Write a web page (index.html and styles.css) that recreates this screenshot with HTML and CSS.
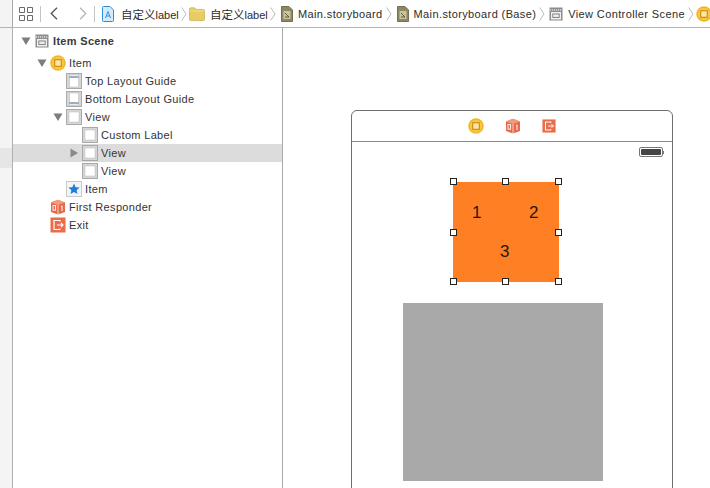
FILE: index.html
```html
<!DOCTYPE html>
<html lang="zh">
<head>
<meta charset="utf-8">
<title>Storyboard</title>
<link rel="stylesheet" href="styles.css">
</head>
<body>
<svg class="defs" width="0" height="0" aria-hidden="true">
  <defs>
    <symbol id="vc" viewBox="0 0 16 16"><circle cx="8" cy="8" r="7.8" fill="#f5bd2f"/><circle cx="8" cy="8" r="6.6" fill="#f8c83f" stroke="#eaa91f" stroke-width=".5"/><rect x="4.7" y="4.7" width="6.6" height="6.6" fill="#fbe6a6" stroke="#c98a12" stroke-width="1.1"/></symbol>
    <symbol id="cube" viewBox="0 0 16 16"><path d="M8 .8 15 3.4V13L8 15.6 1 13V3.4Z" fill="#e8694a"/><path d="M8 .8 15 3.4 8 6 1 3.4Z" fill="#f49a7c"/><path d="M8 6V15.6" stroke="#fff" stroke-width=".7"/><rect x="3" y="6.6" width="2.6" height="4.6" fill="none" stroke="#fff" stroke-width=".9"/><path d="M11 7.5 12 7V12" fill="none" stroke="#fff" stroke-width="1"/></symbol>
    <symbol id="exit" viewBox="0 0 16 16"><rect x=".5" y=".5" width="15" height="15" fill="#ea6c48"/><path d="M10 4.5V3.5H4V12.5H10V11.5" fill="none" stroke="#fff" stroke-width="1.2"/><path d="M7 8H13M11 6 13 8 11 10" fill="none" stroke="#fff" stroke-width="1.1"/></symbol>
    <symbol id="scene" viewBox="0 0 14 14"><rect x=".5" y=".5" width="13" height="13" fill="#8c8c8c"/><path d="M1 3H13" stroke="#ddd" stroke-width="1.4" stroke-dasharray="1.2 .8"/><rect x="2" y="5" width="10" height="7.5" fill="#efefef"/><rect x="3.8" y="7" width="6.4" height="3.4" fill="none" stroke="#777" stroke-width=".9"/></symbol>
    <symbol id="view" viewBox="0 0 16 16"><rect width="16" height="16" fill="#d6d6d6"/><rect x=".5" y=".5" width="15" height="15" fill="none" stroke="#a8a8a8"/><rect x="3" y="3" width="10" height="10" fill="#fff" stroke="#bdbdbd" stroke-width=".5"/></symbol>
    <symbol id="top" viewBox="0 0 16 16"><rect width="16" height="16" fill="#d6d6d6"/><rect x=".5" y=".5" width="15" height="15" fill="none" stroke="#ababab"/><rect x="3.5" y="2" width="9" height="12" fill="#fff" stroke="#b5b5b5" stroke-width=".5"/><path d="M3.5 4H12.5" stroke="#3c5f86" stroke-width="1"/></symbol>
    <symbol id="bottom" viewBox="0 0 16 16"><rect width="16" height="16" fill="#d6d6d6"/><rect x=".5" y=".5" width="15" height="15" fill="none" stroke="#ababab"/><rect x="3.5" y="2" width="9" height="12" fill="#fff" stroke="#b5b5b5" stroke-width=".5"/><path d="M3.5 12H12.5" stroke="#3c5f86" stroke-width="1"/></symbol>
    <symbol id="star" viewBox="0 0 16 16"><rect x=".5" y=".5" width="15" height="15" fill="#f4f4f4" stroke="#c9c9c9"/><path d="M8 2.6 9.6 6.3 13.6 6.6 10.6 9.2 11.5 13.1 8 11 4.5 13.1 5.4 9.2 2.4 6.6 6.4 6.3Z" fill="#1f7be0"/></symbol>
    <symbol id="swift" viewBox="0 0 12 16"><path d="M.5 1.5C.5.9.9.5 1.5.5H8L11.5 4V14.5C11.5 15.1 11.1 15.5 10.5 15.5H1.5C.9 15.5.5 15.1.5 14.5Z" fill="#d6eafb" stroke="#2d8fe3"/><path d="M3.5 12 6 5.5 8.5 12M4.5 10H7.5" fill="none" stroke="#2d8fe3"/></symbol>
    <symbol id="folder" viewBox="0 0 16 14"><path d="M.5 2C.5 1.2 1 .8 1.6.8H5.6L7 2.4H14.6C15.2 2.4 15.5 2.8 15.5 3.4V12.6C15.5 13.2 15.2 13.5 14.6 13.5H1.4C.8 13.5.5 13.2.5 12.6Z" fill="#e8cb64" stroke="#c7a23a" stroke-width=".6"/><path d="M.8 4H15.2" stroke="#f3df92"/></symbol>
    <symbol id="board" viewBox="0 0 12 16"><path d="M.5.5H8L11.5 4V15.5H.5Z" fill="#8f8762" stroke="#77704f"/><rect x="2.5" y="5" width="7" height="8" fill="#c9c3a0"/><path d="M4 7 8 11M4 11H8" stroke="#55503a" stroke-width=".9"/></symbol>
    <symbol id="tri" viewBox="0 0 10 10"><path d="M.5 1.5H9.5L5 9Z" fill="#7d7d7d"/></symbol>
    <symbol id="tri-r" viewBox="0 0 10 10"><path d="M1.5.5V9.5L9 5Z" fill="#8a8a8a"/></symbol>
    <symbol id="sep" viewBox="0 0 6 14"><path d="M.7.5 5 7 .7 13.5" fill="none" stroke="#a8a8a8" stroke-width=".8"/></symbol>
  </defs>
</svg>

<div class="app">
  <header class="toolbar">
    <div class="tb-left"><span class="tb-stub"></span></div>
    <div class="tb-grid">
      <svg width="14" height="14" viewBox="0 0 14 14"><path d="M.5.5H5.5V5.5H.5ZM8.5.5H13.5V5.5H8.5ZM.5 8.5H5.5V13.5H.5ZM8.5 8.5H13.5V13.5H8.5Z" fill="none" stroke="#6b6b6b"/></svg>
    </div>
    <span class="tb-div"></span>
    <div class="tb-nav">
      <svg width="8" height="13" viewBox="0 0 8 13"><path d="M7 .7 1.2 6.5 7 12.3" fill="none" stroke="#555" stroke-width="1.3"/></svg>
      <svg width="8" height="13" viewBox="0 0 8 13"><path d="M1 .7 6.8 6.5 1 12.3" fill="none" stroke="#b5b5b5" stroke-width="1.3"/></svg>
    </div>
    <span class="tb-div"></span>
    <nav class="crumbs">
      <svg class="c-file" width="12" height="16"><use href="#swift"/></svg>
      <span class="c-text c-a"><span class="cjk">自定义</span>label</span>
      <svg class="c-sep" width="6" height="14"><use href="#sep"/></svg>
      <svg class="c-folder" width="16" height="14"><use href="#folder"/></svg>
      <span class="c-text c-b"><span class="cjk">自定义</span>label</span>
      <svg class="c-sep" width="6" height="14"><use href="#sep"/></svg>
      <svg class="c-file2" width="12" height="16"><use href="#board"/></svg>
      <span class="c-text c-c">Main.storyboard</span>
      <svg class="c-sep" width="6" height="14"><use href="#sep"/></svg>
      <svg class="c-file2" width="12" height="16"><use href="#board"/></svg>
      <span class="c-text c-c">Main.storyboard (Base)</span>
      <svg class="c-sep" width="6" height="14"><use href="#sep"/></svg>
      <svg class="c-scene" width="14" height="14"><use href="#scene"/></svg>
      <span class="c-text c-c">View Controller Scene</span>
      <svg class="c-sep" width="6" height="14"><use href="#sep"/></svg>
      <svg class="c-vc" width="16" height="16"><use href="#vc"/></svg>
    </nav>
  </header>

  <div class="main">
    <aside class="gutter"><div class="gutter-sel"></div></aside>

    <section class="outline">
      <div class="row row-scene lvl0">
        <svg class="disc" width="10" height="10"><use href="#tri"/></svg>
        <svg class="ico14" width="14" height="14"><use href="#scene"/></svg>
        <span class="scene-name">Item Scene</span>
      </div>
      <div class="row lvl1"><svg class="disc" width="10" height="10"><use href="#tri"/></svg><svg class="ico" width="16" height="16"><use href="#vc"/></svg><span>Item</span></div>
      <div class="row lvl2"><svg class="ico" width="16" height="16"><use href="#top"/></svg><span>Top Layout Guide</span></div>
      <div class="row lvl2"><svg class="ico" width="16" height="16"><use href="#bottom"/></svg><span>Bottom Layout Guide</span></div>
      <div class="row lvl2d"><svg class="disc" width="10" height="10"><use href="#tri"/></svg><svg class="ico" width="16" height="16"><use href="#view"/></svg><span>View</span></div>
      <div class="row lvl3"><svg class="ico" width="16" height="16"><use href="#view"/></svg><span>Custom Label</span></div>
      <div class="row lvl3d selected"><svg class="disc" width="10" height="10"><use href="#tri-r"/></svg><svg class="ico" width="16" height="16"><use href="#view"/></svg><span>View</span></div>
      <div class="row lvl3"><svg class="ico" width="16" height="16"><use href="#view"/></svg><span>View</span></div>
      <div class="row lvl2"><svg class="ico" width="16" height="16"><use href="#star"/></svg><span>Item</span></div>
      <div class="row lvl1b"><svg class="ico" width="16" height="16"><use href="#cube"/></svg><span>First Responder</span></div>
      <div class="row lvl1b"><svg class="ico" width="16" height="16"><use href="#exit"/></svg><span>Exit</span></div>
    </section>

    <section class="canvas">
      <div class="device">
        <div class="dock">
          <svg width="16" height="16"><use href="#vc"/></svg>
          <svg width="16" height="16"><use href="#cube"/></svg>
          <svg width="14" height="14"><use href="#exit"/></svg>
        </div>
        <div class="screen">
          <div class="status">
            <div class="battery"><span class="battery-fill"></span></div><span class="battery-cap"></span>
          </div>
          <div class="orange">
            <span class="num n1">1</span>
            <span class="num n2">2</span>
            <span class="num n3">3</span>
            <i class="h h-tl"></i><i class="h h-tc"></i><i class="h h-tr"></i>
            <i class="h h-ml"></i><i class="h h-mr"></i>
            <i class="h h-bl"></i><i class="h h-bc"></i><i class="h h-br"></i>
          </div>
          <div class="gray"></div>
        </div>
      </div>
    </section>
  </div>
</div>
</body>
</html>
```

FILE: styles.css
```css
* { box-sizing: border-box; }
html, body { margin: 0; padding: 0; }
body {
  width: 710px;
  height: 488px;
  overflow: hidden;
  background: #fff;
  font-family: "Liberation Sans", "Noto Sans CJK SC", sans-serif;
  color: #2a2a2a;
}
.defs { position: absolute; }
.app { width: 710px; height: 488px; display: flex; flex-direction: column; overflow: hidden; }

/* toolbar */
.toolbar {
  height: 28px;
  flex: none;
  display: flex;
  align-items: center;
  background: #fff;
  border-bottom: 1px solid #b4b4b4;
  white-space: nowrap;
  overflow: hidden;
}
.tb-left { width: 13px; height: 27px; flex: none; background: #f4f4f4; border-right: 1px solid #aaa; }
.tb-grid { width: 14px; height: 14px; margin-left: 6px; flex: none; display: flex; }
.tb-div { width: 1px; height: 16px; background: #c4c4c4; flex: none; margin-left: 7px; }
.tb-nav { display: flex; align-items: center; gap: 21px; margin-left: 9px; flex: none; }
.tb-nav + .tb-div { margin-left: 7px; }
.crumbs { display: flex; align-items: center; margin-left: 7px; flex: none; font-size: 11px; color: #2c2c2c; }
.crumbs svg { flex: none; }
.c-text { color: #2c2c2c; }
.c-c { letter-spacing: .38px; }
.cjk { font-size: 11.5px; }
.c-file { margin-right: 7px; }
.c-a { width: 57px; }
.c-b { width: 57px; }
.c-sep { margin: 0 1px 0 3px; }
.c-folder { margin: 0 5px 0 1px; }
.c-file2 { margin: 0 5px 0 4px; }
.c-scene { margin: 0 5px 0 3px; }
.c-vc { margin-left: 1px; }

/* main */
.main { flex: 1; display: flex; min-height: 0; }
.gutter { width: 13px; flex: none; background: #f4f4f4; border-right: 1px solid #b0b0b0; padding-top: 120px; }
.gutter-sel { height: 20px; background: #e6e6e6; }

/* outline */
.outline { width: 270px; flex: none; border-right: 1px solid #a9a9a9; padding-top: 4px; font-size: 11px; color: #333; }
.row { height: 18px; display: flex; align-items: center; white-space: nowrap; letter-spacing: .32px; }
.row .ico { margin-right: 3px; flex: none; }
.row .disc { flex: none; }
.row-scene { height: 18px; margin-bottom: 4px; }
.scene-name { font-weight: 700; margin-left: 4px; color: #3a3a3a; }
.ico14 { flex: none; }
.lvl0 { padding-left: 8px; }
.lvl0 .disc { margin-right: 4px; }
.lvl1 { padding-left: 24px; }
.lvl1 .disc { margin-right: 3px; }
.lvl1b { padding-left: 37px; }
.lvl2 { padding-left: 53px; }
.lvl2d { padding-left: 40px; }
.lvl2d .disc { margin-right: 3px; }
.lvl3 { padding-left: 69px; }
.lvl3d { padding-left: 56px; }
.lvl3d .disc { margin-right: 3px; }
.selected { background: #dcdcdc; }

/* canvas */
.canvas { flex: 1; min-width: 0; padding: 82px 0 0 68px; background: #fff; }
.device {
  width: 322px;
  height: 400px;
  border: 1px solid #6e6e6e;
  border-radius: 6px 6px 0 0;
  background: #fff;
}
.dock {
  height: 31px;
  border-bottom: 1px solid #8a8a8a;
  display: flex;
  align-items: center;
  justify-content: center;
  gap: 21px;
}
.screen { padding-top: 40px; position: relative; }
.status { position: absolute; top: 5px; right: 8px; display: flex; align-items: center; }
.battery { width: 24px; height: 10px; border: 1px solid #777; border-radius: 2px; padding: 1px; }
.battery-fill { display: block; width: 100%; height: 100%; background: #454545; border-radius: 1px; }
.battery-cap { width: 1px; height: 3px; background: #777; }

.orange {
  position: relative;
  width: 106px;
  height: 100px;
  margin-left: 101px;
  background: #ff7f24;
}
.num { position: absolute; font-size: 17px; line-height: 18px; color: #2a1608; }
.n1 { left: 19px; top: 22px; }
.n2 { left: 76px; top: 22px; }
.n3 { left: 47px; top: 61px; }
.h { position: absolute; width: 7px; height: 7px; background: #fff; border: 1px solid #222; }
.h-tl { left: -3px; top: -4px; }
.h-tc { left: 49px; top: -4px; }
.h-tr { left: 102px; top: -4px; }
.h-ml { left: -3px; top: 47px; }
.h-mr { left: 102px; top: 47px; }
.h-bl { left: -3px; top: 96px; }
.h-bc { left: 49px; top: 96px; }
.h-br { left: 102px; top: 96px; }

.gray { width: 200px; height: 178px; margin: 21px 0 0 51px; background: #a9a9a9; }
```
